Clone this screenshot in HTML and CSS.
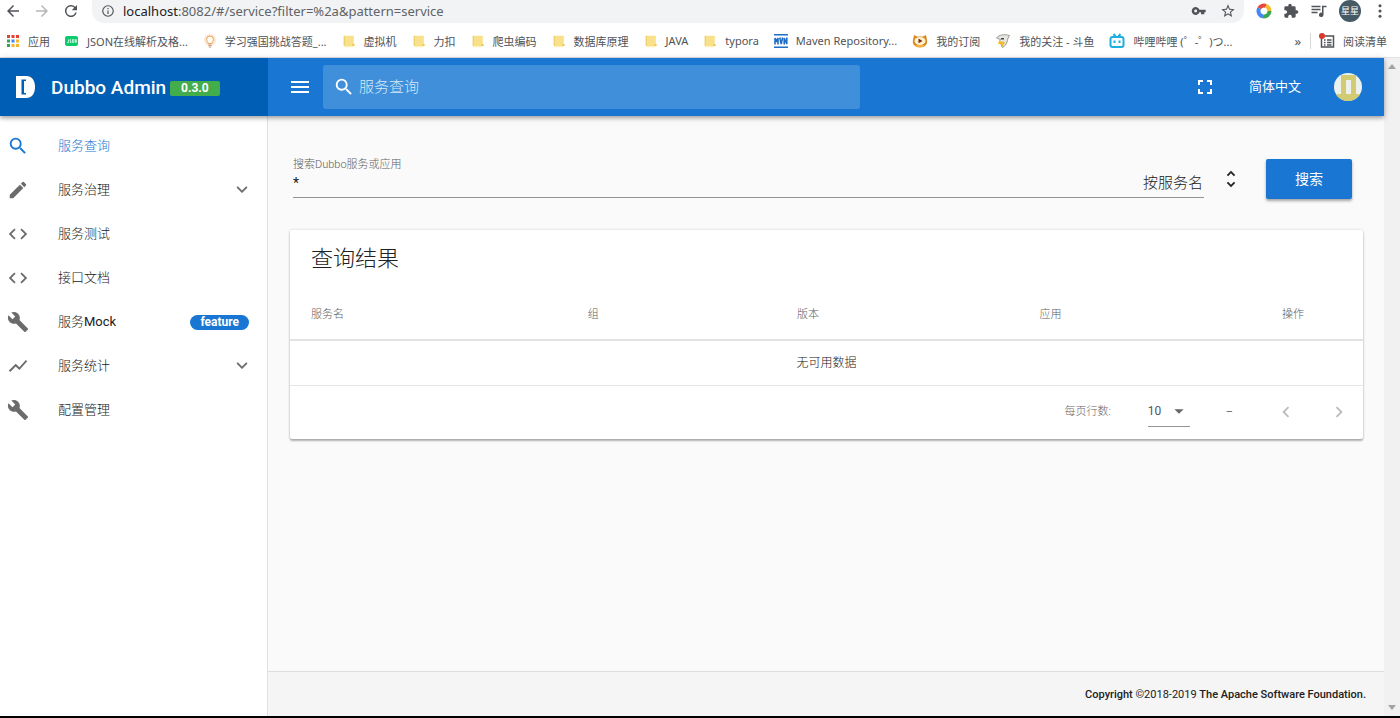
FILE: index.html
```html
<!DOCTYPE html>
<html lang="zh-CN">
<head>
<meta charset="utf-8">
<meta name="viewport" content="width=device-width, initial-scale=1">
<title>Dubbo Admin</title>
<link rel="stylesheet" href="styles.css">
</head>
<body>
<svg class="defs" aria-hidden="true">
  <symbol id="i-search" viewBox="0 0 24 24"><path d="M15.5 14h-.79l-.28-.27A6.47 6.47 0 0 0 16 9.5 6.5 6.5 0 1 0 9.5 16c1.61 0 3.09-.59 4.23-1.57l.27.28v.79l5 4.99L20.49 19l-4.99-5zm-6 0C7.01 14 5 11.99 5 9.5S7.01 5 9.5 5 14 7.01 14 9.5 11.99 14 9.5 14z"/></symbol>
  <symbol id="i-edit" viewBox="0 0 24 24"><path d="M3 17.25V21h3.75L17.81 9.94l-3.75-3.75L3 17.25zM20.71 7.04a1 1 0 0 0 0-1.41l-2.34-2.34a1 1 0 0 0-1.41 0l-1.83 1.83 3.75 3.75 1.83-1.83z"/></symbol>
  <symbol id="i-code" viewBox="0 0 24 24"><path d="M9.4 16.6L4.8 12l4.6-4.6L8 6l-6 6 6 6 1.4-1.4zm5.2 0l4.6-4.6-4.6-4.6L16 6l6 6-6 6-1.4-1.4z"/></symbol>
  <symbol id="i-build" viewBox="0 0 24 24"><path d="M22.7 19l-9.1-9.1c.9-2.3.4-5-1.5-6.9-2-2-5-2.4-7.4-1.3L9 6 6 9 1.6 4.7C.4 7.1.9 10.1 2.9 12.1c1.9 1.9 4.6 2.4 6.9 1.5l9.1 9.1c.4.4 1 .4 1.4 0l2.3-2.3c.5-.4.5-1.1.1-1.4z"/></symbol>
  <symbol id="i-chart" viewBox="0 0 24 24"><path d="M3.5 18.49l6-6.01 4 4L22 6.92l-1.41-1.41-7.09 7.97-4-4L2 16.99z"/></symbol>
  <symbol id="i-down" viewBox="0 0 24 24"><path d="M7.41 7.84L12 12.42l4.59-4.58L18 9.25l-6 6-6-6z"/></symbol>
  <symbol id="i-left" viewBox="0 0 24 24"><path d="M15.41 7.41L14 6l-6 6 6 6 1.41-1.41L10.83 12z"/></symbol>
  <symbol id="i-right" viewBox="0 0 24 24"><path d="M10 6L8.59 7.41 13.17 12l-4.58 4.59L10 18l6-6z"/></symbol>
  <symbol id="i-folder" viewBox="0 0 14 16"><path fill="#f9e08a" d="M1 2h11.5v9.5l.8.8v1.4H1z"/><path fill="#eccd68" d="M1 2h1.2v11.7H1zM10.5 11.5h2.8v2.2h-2.8z"/><path fill="#fdf1b9" d="M2 13.7h10v1.5H2z"/></symbol>
</svg>

<header class="browser">
  <div class="address-row">
    <button class="tool" aria-label="后退"><svg class="s18" viewBox="0 0 24 24"><path d="M20 11H7.83l5.59-5.59L12 4l-8 8 8 8 1.41-1.41L7.83 13H20z"/></svg></button>
    <button class="tool faded" aria-label="前进"><svg class="s18" viewBox="0 0 24 24"><path d="M12 4l-1.41 1.41L16.17 11H4v2h12.17l-5.58 5.59L12 20l8-8z"/></svg></button>
    <button class="tool" aria-label="刷新"><svg class="s18" viewBox="0 0 24 24"><path d="M17.65 6.35A8 8 0 1 0 19.73 14h-2.08A6 6 0 1 1 12 6c1.66 0 3.14.69 4.22 1.78L13 11h7V4z"/></svg></button>
    <div class="address">
      <svg class="s14" viewBox="0 0 24 24"><path d="M11 7h2v2h-2zm0 4h2v6h-2zm1-9a10 10 0 1 0 0 20 10 10 0 0 0 0-20zm0 18a8 8 0 1 1 0-16 8 8 0 0 1 0 16z"/></svg>
      <span class="url"><b>localhost</b>:8082/#/service?filter=%2a&amp;pattern=service</span>
      <svg class="s16" viewBox="0 0 24 24"><path d="M22 10H12.7A6 6 0 1 0 12.7 14H15v3h5v-3h2zM7 14.2A2.2 2.2 0 1 1 7 9.800a2.200 2.200 0 0 1 0 4.400z"/></svg>
      <svg class="s16" viewBox="0 0 24 24"><path d="M22 9.240l-7.190-.62L12 2 9.190 8.630 2 9.240l5.460 4.730L5.820 21 12 17.270 18.180 21l-1.630-7.030zM12 15.400l-3.760 2.270 1-4.280-3.320-2.880 4.380-.38L12 6.100l1.710 4.040 4.380.38-3.320 2.880 1 4.280z"/></svg>
    </div>
    <div class="extensions">
      <svg class="s16 line" viewBox="0 0 16 16" stroke-width="4"><path stroke="#e8453c" d="M3.240 5.250A5.500 5.500 0 0 1 9.900 2.800"/><path stroke="#f9bb2d" d="M9.900 2.800a5.500 5.500 0 0 1 3.600 5.200"/><path stroke="#4688f1" d="M3.240 5.250A5.500 5.500 0 0 0 7 13.400"/><path stroke="#3aa757" d="M7 13.400A5.500 5.500 0 0 0 13.500 8"/></svg>
      <svg class="s16" viewBox="0 0 24 24"><path d="M20.500 11H19V7a2 2 0 0 0-2-2h-4V3.500a2.500 2.500 0 0 0-5 0V5H4a2 2 0 0 0-2 2v3.800h1.500a2.700 2.700 0 0 1 0 5.400H2V20a2 2 0 0 0 2 2h3.800v-1.500a2.700 2.700 0 0 1 5.400 0V22H17a2 2 0 0 0 2-2v-4h1.500a2.500 2.500 0 0 0 0-5z"/></svg>
      <svg class="s18" viewBox="0 0 24 24"><path d="M2 5h12v2H2zm0 4h12v2H2zm0 4h8v2H2zM16 5h6v2h-4v10a3 3 0 1 1-2-2.800z"/></svg>
      <span class="profile">星星</span>
      <svg class="s16" viewBox="0 0 24 24"><circle cx="12" cy="4" r="2.300"/><circle cx="12" cy="12" r="2.300"/><circle cx="12" cy="20" r="2.300"/></svg>
    </div>
  </div>
  <nav class="bookmarks" aria-label="书签">
    <a href="#"><svg class="s14" viewBox="0 0 14 14"><path fill="#e34133" d="M1 1h3v3H1zM5.500 1h3v3h-3zM10 1h3v3h-3z"/><path fill="#32a352" d="M1 5.500h3v3H1zM1 10h3v3H1z"/><path fill="#4285f4" d="M5.500 5.500h3v3h-3z"/><path fill="#f5b52e" d="M10 5.500h3v3h-3zM5.500 10h3v3h-3zM10 10h3v3h-3z"/></svg>应用</a>
    <a href="#"><svg class="s14" viewBox="0 0 14 14"><rect x="0" y="2" width="13" height="10" rx="2" fill="#0bcb6b"/><path fill="none" stroke="#fff" stroke-width=".7" d="M3.500 5.500v3H2M5.800 5.500H5v1.500h1V8.500H5M7.500 5.500h1.300v3H7.500zM10.300 8.800V5.500l1 3V5.200"/></svg>JSON在线解析及格...</a>
    <a href="#"><svg class="s14" viewBox="0 0 14 14"><circle cx="7" cy="6" r="6" fill="#fbe7d8"/><path fill="#fffdf3" stroke="#e9a35b" d="M5.200 9.500c0-1.500-1.600-2-1.600-4.100a3.400 3.400 0 0 1 6.800 0c0 2.100-1.600 2.600-1.600 4.100z"/><path stroke="#b98a68" d="M5.200 11.200h3.600M5.800 13h2.400"/></svg>学习强国挑战答题_...</a>
    <a href="#"><svg class="s14"><use href="#i-folder"/></svg>虚拟机</a>
    <a href="#"><svg class="s14"><use href="#i-folder"/></svg>力扣</a>
    <a href="#"><svg class="s14"><use href="#i-folder"/></svg>爬虫编码</a>
    <a href="#"><svg class="s14"><use href="#i-folder"/></svg>数据库原理</a>
    <a href="#"><svg class="s14"><use href="#i-folder"/></svg>JAVA</a>
    <a href="#"><svg class="s14"><use href="#i-folder"/></svg>typora</a>
    <a href="#"><svg class="s14" viewBox="0 0 14 14"><path fill="#1f6fc6" d="M0 0h14v1.500H0zM0 12.500h14V14H0z"/><path fill="none" stroke="#1f6fc6" stroke-width="1.600" d="M1 10.500V4l1.500 3L4 4v6.500M5.800 3.500L7.200 10l1.400-6.500M10.200 10.500V4l2.600 6V3.500"/></svg>Maven Repository...</a>
    <a href="#"><svg class="s16" viewBox="0 0 16 16"><path fill="#d98a1c" d="M1 7l1-5 3 1.500h6L14 2l1 5c1 4-2 7.500-7 7.500S0 11 1 7z"/><ellipse cx="8" cy="8" rx="5.500" ry="4" fill="#fff2d2"/><path fill="#7c2e12" d="M6.500 5.500L10.500 8l-4 2.300z"/><path fill="#f6b13a" d="M3 12h10l-2 2H5z"/></svg>我的订阅</a>
    <a href="#"><svg class="s16" viewBox="0 0 16 16"><path fill="#e6e6e2" stroke="#85857f" stroke-width=".8" d="M1.500 5c3-3.500 8-4 13-2.500-1 2-2 3-2 5-1 4-3 6-5 7-1-1-1-2-1-3C4 11 4 8 5.500 6.500z"/><path fill="#f2bc27" d="M4 8l6 1-2.500 5-1-3L3 11z"/><path fill="#444" d="M6 5h3v1.500H6z"/></svg>我的关注 - 斗鱼</a>
    <a href="#"><svg class="s16 line" viewBox="0 0 16 16" stroke="#20aee0" stroke-width="2"><rect x="1.500" y="4" width="13" height="10" rx="2"/><path d="M4.500 1L7 4M11.500 1L9 4M5.500 7.500v2.500M10.500 7.500v2.500"/></svg>哔哩哔哩 (゜-゜)つ...</a>
    <button class="more" aria-label="更多书签">»</button>
    <button class="reading"><svg class="s16" viewBox="0 0 16 16"><path fill="none" stroke="#505357" stroke-width="1.500" d="M2.500 4v10h12V3H6M5 7h1.500M8 7h4.500M5 9.500h1.500M8 9.500h4.500M5 12h1.500M8 12h4.500"/><circle cx="3" cy="3" r="3" fill="#d5382c"/></svg>阅读清单</button>
  </nav>
</header>

<div class="viewport">
  <div class="app">
    <header class="toolbar">
      <div class="brand">
        <svg class="logo" viewBox="0 0 22 24"><path fill="#fff" fill-rule="evenodd" d="M1 1h10c6 0 9 4.500 9 11s-3 11-9 11H1zM6.500 4.500v15H11V18H9V6h2V4.500z"/></svg>
        <h1>Dubbo Admin</h1>
        <span class="version">0.3.0</span>
      </div>
      <div class="toolbar-main">
        <button class="icon-button" aria-label="菜单"><svg class="s24" viewBox="0 0 24 24"><path d="M3 18h18v-2H3zm0-5h18v-2H3zm0-7v2h18V6z"/></svg></button>
        <label class="quick-search"><svg class="s22"><use href="#i-search"/></svg><input type="text" aria-label="服务查询" placeholder="服务查询"></label>
        <div class="toolbar-actions">
          <button class="icon-button" aria-label="全屏"><svg class="s24" viewBox="0 0 24 24"><path d="M7 14H5v5h5v-2H7zm-2-4h2V7h3V5H5zm12 7h-3v2h5v-5h-2zM14 5v2h3v3h2V5z"/></svg></button>
          <button class="language">简体中文</button>
          <button class="icon-button" aria-label="用户"><svg class="avatar" viewBox="0 0 28 28"><clipPath id="round"><circle cx="14" cy="14" r="14"/></clipPath><g clip-path="url(#round)"><path fill="#edf1ee" d="M0 0h28v28H0z"/><path fill="#d2cb72" fill-rule="evenodd" d="M7 2h15v19h6v7H0v-7h7zM12 7v14h5V7z"/></g></svg></button>
        </div>
      </div>
    </header>

    <div class="body">
      <nav class="sidebar">
        <a class="active" href="#"><svg class="s22"><use href="#i-search"/></svg><span>服务查询</span></a>
        <a href="#"><svg class="s22"><use href="#i-edit"/></svg><span>服务治理</span><svg class="s22 end"><use href="#i-down"/></svg></a>
        <a href="#"><svg class="s22"><use href="#i-code"/></svg><span>服务测试</span></a>
        <a href="#"><svg class="s22"><use href="#i-code"/></svg><span>接口文档</span></a>
        <a href="#"><svg class="s22"><use href="#i-build"/></svg><span>服务<em>Mock</em></span><strong class="feature">feature</strong></a>
        <a href="#"><svg class="s22"><use href="#i-chart"/></svg><span>服务统计</span><svg class="s22 end"><use href="#i-down"/></svg></a>
        <a href="#"><svg class="s22"><use href="#i-build"/></svg><span>配置管理</span></a>
      </nav>

      <div class="content">
        <main>
          <form class="search-form">
            <div class="field">
              <label for="query">搜索Dubbo服务或应用</label>
              <div class="field-row">
                <input id="query" type="text" value="*">
                <select aria-label="搜索方式"><option>按服务名</option></select>
              </div>
            </div>
            <svg class="s22 unfold" viewBox="0 0 24 24"><path d="M12 5.830L15.170 9l1.410-1.410L12 3 7.410 7.590 8.830 9zm0 12.340L8.830 15l-1.410 1.410L12 21l4.590-4.590L15.170 15z"/></svg>
            <button class="submit" type="button">搜索</button>
          </form>

          <section class="card">
            <h2>查询结果</h2>
            <table>
              <thead><tr><th class="c-service">服务名</th><th class="c-group">组</th><th class="c-mid">版本</th><th class="c-mid">应用</th><th>操作</th></tr></thead>
              <tbody><tr><td colspan="5">无可用数据</td></tr></tbody>
            </table>
            <div class="pager">
              <label for="rows">每页行数:</label>
              <div class="rows-select">
                <select id="rows"><option>10</option></select>
                <svg class="s22" viewBox="0 0 24 24"><path d="M7 10l5 5 5-5z"/></svg>
              </div>
              <span class="range">–</span>
              <button aria-label="上一页" disabled><svg class="s22"><use href="#i-left"/></svg></button>
              <button aria-label="下一页" disabled><svg class="s22"><use href="#i-right"/></svg></button>
            </div>
          </section>
        </main>
        <footer><b>Copyright</b> ©2018-2019 <b>The Apache Software Foundation.</b></footer>
      </div>
    </div>
  </div>
  <div class="scrollbar" aria-hidden="true">
    <svg viewBox="0 0 8 5"><path d="M4 0l4 5H0z"/></svg>
    <svg viewBox="0 0 8 5"><path d="M0 0h8L4 5z"/></svg>
  </div>
</div>
</body>
</html>
```
FILE: styles.css
```css
* { box-sizing: border-box; }

body {
  margin: 0;
  min-height: 100vh;
  display: flex;
  flex-direction: column;
  border-bottom: 2px solid #000;
  background: #fff;
  color: #212121;
  font-family: Roboto, "Noto Sans CJK SC", sans-serif;
  font-size: 13px;
}

button, input, select { font: inherit; color: inherit; border: 0; padding: 0; background: none; }
select { appearance: none; opacity: 1; }
a { color: inherit; text-decoration: none; }
svg { display: block; flex: none; fill: currentColor; }
svg.line { fill: none; }

.defs { position: absolute; width: 0; height: 0; }
.s14 { width: 14px; height: 14px; }
.s16 { width: 16px; height: 16px; }
.s18 { width: 18px; height: 18px; }
.s22 { width: 22px; height: 22px; }
.s24 { width: 24px; height: 24px; }

/* Browser chrome */
.browser {
  border-bottom: 1px solid #dfe1e5;
  color: #505357;
  font-family: "Noto Sans", "Noto Sans CJK SC", sans-serif;
}
.address-row { display: flex; align-items: center; height: 24px; padding: 0 12px 2px 4px; }
.tool { width: 29px; }
.faded { color: #b4b6b9; }
.address {
  flex: 1;
  display: flex;
  align-items: center;
  gap: 13px;
  height: 24px;
  margin-left: 1px;
  padding: 0 8px 0 9px;
  border-radius: 0 0 12px 12px;
  background: #f1f3f4;
}
.url { flex: 1; margin-left: -5px; font-size: 13px; color: #606367; }
.url b { font-weight: 400; color: #202124; }
.extensions { display: flex; align-items: center; gap: 11px; margin-left: 12px; }
.profile {
  width: 22px;
  height: 22px;
  border-radius: 50%;
  background: #455a64;
  color: #fff;
  font-size: 9px;
  line-height: 22px;
  text-align: center;
}
.bookmarks {
  display: flex;
  align-items: center;
  height: 33px;
  gap: 15px;
  padding: 0 13px 0 6px;
  font-size: 11px;
  white-space: nowrap;
}
.bookmarks a, .reading { display: flex; align-items: center; gap: 8px; }
.more { margin-left: auto; font-size: 13px; }
.reading { padding-left: 8px; border-left: 1px solid #d5d7da; margin-left: -6px; }

/* Application frame */
.viewport { flex: 1; display: flex; }
.app { flex: 1; display: flex; flex-direction: column; min-width: 0; }
.scrollbar {
  width: 16px;
  display: flex;
  flex-direction: column;
  justify-content: space-between;
  align-items: center;
  padding: 6px 0;
  background: #f1f1f1;
  color: #a3a3a3;
}
.scrollbar svg { width: 8px; height: 5px; }

.toolbar {
  position: relative;
  display: flex;
  height: 58px;
  background: #1976d2;
  color: #fff;
  box-shadow: 0 2px 4px rgba(0, 0, 0, .3), 0 1px 8px rgba(0, 0, 0, .12);
}
.brand {
  width: 268px;
  display: flex;
  align-items: center;
  padding-left: 15px;
  background: #005eb5;
}
.logo { width: 22px; height: 24px; }
.brand h1 { margin: 0 0 0 14px; font-size: 19px; font-weight: 500; }
.version {
  margin: 2px 0 0 4px;
  padding: 0 11px;
  border-radius: 2px;
  background: #43ad4c;
  font-size: 12px;
  font-weight: 700;
  line-height: 15px;
}
.toolbar-main { flex: 1; display: flex; align-items: center; padding: 0 22px 0 20px; }
.quick-search {
  width: 50%;
  height: 44px;
  display: flex;
  align-items: center;
  gap: 4px;
  margin-left: 11px;
  padding: 0 10px;
  border-radius: 3px;
  background: #408fdb;
}
.quick-search input { flex: 1; min-width: 0; font-size: 15px; font-weight: 300; outline: 0; }
.quick-search input::placeholder { color: #d9e9f8; opacity: 1; }
.toolbar-actions { display: flex; align-items: center; margin-left: auto; }
.language { margin: 0 33px 0 32px; padding-bottom: 3px; }
.avatar { width: 28px; height: 28px; }

.body { flex: 1; display: flex; }
.sidebar { width: 268px; padding-top: 8px; border-right: 1px solid #e0e0e0; background: #fff; }
.sidebar a { display: flex; align-items: center; height: 44px; padding: 0 14px 0 7px; font-weight: 300; }
.sidebar svg { color: #6b6b6b; }
.sidebar span { flex: 1; margin-left: 29px; padding-bottom: 4px; }
.sidebar em { font-style: normal; font-weight: 400; }
.sidebar .active, .sidebar .active svg { color: #1976d2; }
.feature {
  margin-right: 4px;
  padding: 0 10px;
  border-radius: 8px;
  background: #1976d2;
  color: #fff;
  font-size: 12px;
  font-weight: 700;
  line-height: 15px;
}

.content { flex: 1; display: flex; flex-direction: column; min-width: 0; background: #fafafa; }
main { flex: 1; padding: 40px 21px 0 22px; }

.search-form { display: flex; align-items: flex-start; padding: 0 11px 0 3px; }
.field { flex: 1; border-bottom: 1px solid #949494; font-weight: 300; }
.field label { display: block; color: #606060; font-size: 11px; line-height: 18px; }
.field-row { display: flex; height: 23px; align-items: center; padding-bottom: 5px; }
.field-row input { flex: 1; min-width: 0; outline: 0; font-size: 14px; font-weight: 400; }
.field-row select { font-size: 15px; }
.unfold { margin: 12px 24px 0 16px; }
.submit {
  height: 40px;
  width: 86px;
  margin-top: 3px;
  padding-bottom: 3px;
  border-radius: 2px;
  background: #1976d2;
  color: #fff;
  font-size: 14px;
  box-shadow: 0 2px 3px rgba(0, 0, 0, .35);
}

.card {
  margin-top: 31px;
  border-radius: 2px;
  background: #fff;
  box-shadow: 0 2px 2px rgba(0, 0, 0, .28), 0 0 3px rgba(0, 0, 0, .16);
}
.card h2 { margin: 0; padding: 13px 21px 14px; font-size: 22px; line-height: 32px; font-weight: 300; }
table { width: 100%; table-layout: fixed; border-collapse: collapse; }
th {
  height: 51px;
  padding: 0 21px 2px;
  border-bottom: 2px solid #e2e2e2;
  color: #606060;
  font-size: 11px;
  font-weight: 300;
  text-align: left;
}
.c-service { width: 25.8%; }
.c-group { width: 19.5%; }
.c-mid { width: 22.6%; }
td { height: 45px; padding: 0 0 2px; border-bottom: 1px solid #e6e6e6; font-size: 12px; font-weight: 300; text-align: center; }
.pager {
  display: flex;
  align-items: center;
  justify-content: flex-end;
  height: 53px;
  padding: 0 13px 1px 0;
  color: #666;
  font-size: 11px;
}
.pager label { padding-bottom: 3px; font-weight: 300; }
.rows-select {
  display: flex;
  align-items: center;
  width: 42px;
  height: 30px;
  margin: 0 36px 0 37px;
  border-bottom: 1px solid #949494;
}
.rows-select select { width: 20px; font-size: 12px; color: #555; }
.pager button { margin-left: 31px; color: #bbb; }
.pager .range + button { margin-left: 42px; }

footer {
  height: 45px;
  padding: 0 18px;
  border-top: 1px solid #dedede;
  background: #f5f5f5;
  font-size: 11px;
  line-height: 45px;
  text-align: right;
}
footer b { font-weight: 500; }
```
